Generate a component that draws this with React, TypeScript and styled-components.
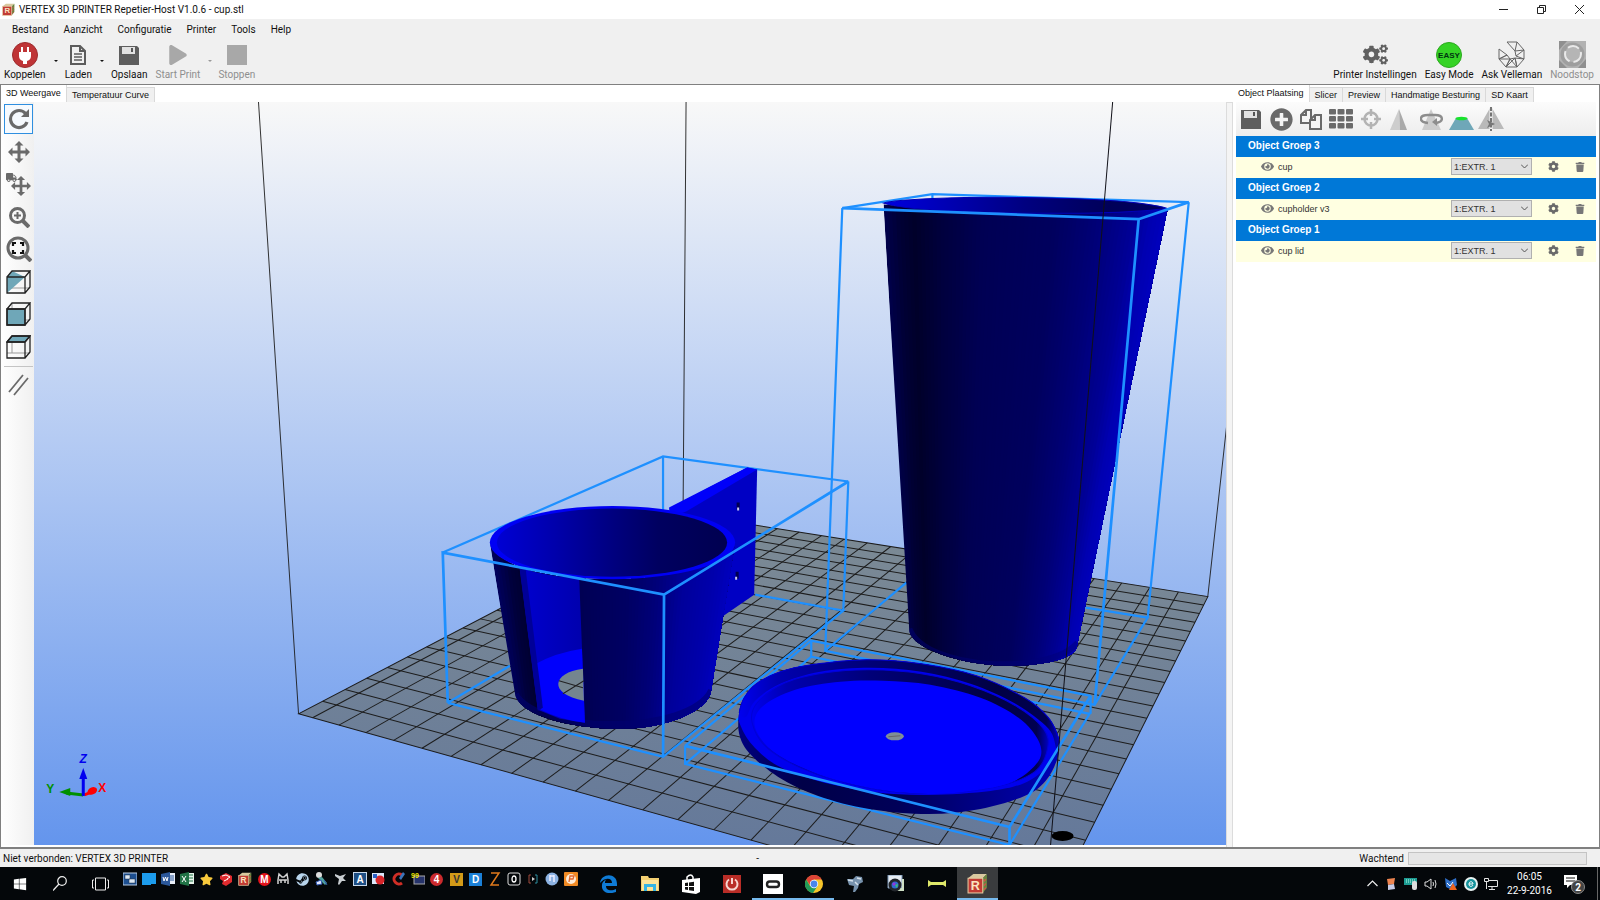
import React, { useState } from 'react';
import styled, { createGlobalStyle } from 'styled-components';
import { FaCog, FaTrash, FaEye, FaPlay, FaTruck, FaPlusCircle, FaWindows, FaStar, FaSteam, FaCogs } from 'react-icons/fa';

const ui = 'Roboto, "Noto Sans", sans-serif';
const classic = '"Liberation Sans", Arial, sans-serif';

const Global = createGlobalStyle`
  * { box-sizing: border-box; }
  html, body { margin: 0; padding: 0; }
  body { background: #f0f0f0; font: 10px/14px ${ui}; color: #111; }
  button, select { font: inherit; color: inherit; border: 0; padding: 0; margin: 0; background: none; }
  svg { display: block; flex: none; }
`;

/* ---------- window frame ---------- */

const Window = styled.div`
  display: flex;
  flex-direction: column;
  height: 100vh;
  overflow: hidden;
`;

const TitleBar = styled.header`
  display: flex;
  align-items: center;
  height: 19px;
  padding: 0 4px 0 2px;
  gap: 4px;
  background: #fff;
`;

const Title = styled.h1`
  flex: 1;
  margin: 0;
  font: 10px/14px ${ui};
`;

const CaptionButton = styled.button`
  display: flex;
  justify-content: center;
  width: 34px;
`;

const MenuBar = styled.nav`
  display: flex;
  gap: 15px;
  height: 20px;
  padding: 1px 0 0 12px;
  line-height: 20px;
`;

const Toolbar = styled.div`
  display: flex;
  align-items: flex-start;
  height: 45px;
  padding: 2px 6px 0 4px;
`;

const ToolButton = styled.button<{ $muted?: boolean; $gap: number }>`
  display: flex;
  flex-direction: column;
  align-items: center;
  margin-left: ${p => p.$gap}px;
  color: ${p => (p.$muted ? '#8e8e8e' : '#111')};
`;

const IconSlot = styled.span`
  display: flex;
  align-items: center;
  justify-content: center;
  height: 27px;
`;

const Caret = styled.button<{ $muted?: boolean }>`
  width: 0;
  height: 0;
  margin: 19px 0 0 8px;
  border: 2px solid transparent;
  border-top-color: ${p => (p.$muted ? '#999' : '#111')};
`;

const Spacer = styled.div`
  flex: 1;
`;

const Workspace = styled.main`
  flex: 1;
  min-height: 0;
  display: flex;
  border: solid #808080;
  border-width: 1px 1px 2px;
  background: #fff;
`;

const LeftPane = styled.section`
  flex: 1;
  min-width: 0;
  display: flex;
  flex-direction: column;
`;

const Tabs = styled.div`
  display: flex;
  align-items: flex-end;
  height: 17px;
  font: 9px/14px ${classic};
`;

const Tab = styled.button<{ $active?: boolean }>`
  height: ${p => (p.$active ? 17 : 15)}px;
  padding: 0 5px ${p => (p.$active ? 2 : 0)}px;
  background: ${p => (p.$active ? '#fff' : '#f0f0f0')};
  border: solid #d9d9d9;
  border-width: ${p => (p.$active ? '0 1px 0 0' : '1px 1px 0 0')};
`;

const ViewRow = styled.div`
  flex: 1;
  min-height: 0;
  display: flex;
  padding-bottom: 2px;
`;

const SideTools = styled.div`
  width: 33px;
  padding: 2px 1px 0 3px;
  background: linear-gradient(90deg, #fff, #f0f0f0);
`;

const SideGrid = styled.div`
  display: grid;
  grid-template-rows: repeat(4, 33px 32px);
  margin-bottom: 3px;
  padding-bottom: 2px;
  border-bottom: 1px solid #c4c4c4;
`;

const SideButton = styled.button<{ $on?: boolean }>`
  display: flex;
  align-items: center;
  justify-content: center;
  width: 29px;
  height: 30px;
  border: 1px solid ${p => (p.$on ? '#2f8fe0' : 'transparent')};
  background: ${p => (p.$on ? '#f6fafe' : 'none')};
`;

const Viewport = styled.svg`
  flex: 1;
  min-width: 0;
  height: 100%;
`;

const Splitter = styled.div`
  width: 7px;
  margin-top: 17px;
  border: solid #dcdcdc;
  border-width: 1px 1px 0;
  background: #f4f4f4;
`;

/* ---------- object panel ---------- */

const RightPane = styled.aside`
  width: 366px;
  padding-right: 3px;
  display: flex;
  flex-direction: column;
`;

const PanelTools = styled.div`
  display: flex;
  align-items: center;
  gap: 4px;
  height: 34px;
  margin-left: 3px;
  padding-left: 2px;
  background: linear-gradient(#fcfcfc, #ededed);
`;

const PanelButton = styled.button`
  display: flex;
  justify-content: center;
  width: 26px;
`;

const ObjectList = styled.div`
  margin-left: 3px;
`;

const GroupHeader = styled.h2`
  height: 21px;
  margin: 0;
  padding-left: 12px;
  background: #0078d7;
  color: #fff;
  font: bold 10px/20px ${classic};
`;

const ObjectRow = styled.div`
  display: flex;
  align-items: center;
  height: 21px;
  padding: 0 9px 2px 25px;
  background: #ffffe1;
  font: 9px/14px ${classic};
  color: #333;
`;

const ObjectName = styled.label`
  flex: 1;
  padding-left: 4px;
`;

const SelectBox = styled.span`
  position: relative;
  width: 81px;
  margin-right: 16px;

  svg { position: absolute; right: 4px; top: 6px; pointer-events: none; }
`;

const ExtruderSelect = styled.select`
  display: block;
  appearance: none;
  width: 100%;
  height: 17px;
  padding-left: 2px;
  border: 1px solid #b0b0b0;
  border-radius: 0;
  background: #e1e1e1;
`;

const RowButton = styled.button`
  width: 12px;
  margin-left: 15px;
  &:first-of-type { margin-left: 0; }
`;

/* ---------- bottom bars ---------- */

const StatusBar = styled.footer`
  display: grid;
  grid-template-columns: 9fr 10fr;
  align-items: center;
  height: 18px;
  padding: 1px 13px 0 3px;
  background: #f0f0f0;
`;

const StatusRight = styled.div`
  display: flex;
  align-items: center;
  justify-content: space-between;
  padding-left: 3px;
`;

const StatusProgress = styled.div`
  display: flex;
  align-items: center;
  gap: 4px;
`;

const Progress = styled.div`
  width: 179px;
  height: 13px;
  border: 1px solid #c4c4c4;
  background: #e6e6e6;
`;

const Taskbar = styled.nav`
  display: flex;
  height: 33px;
  background: #04070a;
  color: #fff;
`;

const TaskButton = styled.button<{ $w: number; $running?: boolean; $focused?: boolean }>`
  display: flex;
  align-items: center;
  justify-content: center;
  width: ${p => p.$w}px;
  background: ${p => (p.$focused ? '#3a3c3e' : 'none')};
  box-shadow: ${p => (p.$running || p.$focused ? 'inset 0 -2px #76b9ed' : 'none')};
`;

const QuickLaunch = styled.div`
  display: grid;
  grid-template-columns: repeat(24, 1fr);
  width: 461px;
  height: 24px;
  margin-right: 7px;
`;

const QuickButton = styled.button`
  display: flex;
  align-items: center;
  justify-content: center;
`;

const Tray = styled.div`
  display: flex;
  align-items: center;
  gap: 6px;
`;

const Clock = styled.time`
  width: 51px;
  text-align: center;
`;

const ActionCenter = styled.button`
  width: 28px;
  margin: 0 7px 0 1px;
`;

const DesktopEdge = styled.div`
  width: 3px;
  border-left: 1px solid #666;
`;

/* ---------- icons ---------- */

const G = '#6a6a6a';

const AppLogo = ({ size = 13 }: { size?: number }) => (
  <svg width={size} height={size} viewBox="0 0 20 20">
    <path d="M1 5 6 1h13l-4 4z" fill="#d8c9a0" />
    <path d="M15 5l4-4v13l-4 5z" fill="#68853f" />
    <path d="M16 8l2-2M16 12l2-2M16 16l2-2" stroke="#c9534a" strokeWidth="1.5" />
    <rect x="1" y="5" width="14" height="14" fill="#c23b34" stroke="#e5c9a0" />
    <text x="8" y="16" fontFamily={classic} fontWeight="bold" fontSize="12" fill="#fbe3c0" textAnchor="middle">R</text>
  </svg>
);

const Disk = ({ size }: { size: number }) => (
  <svg width={size} height={size} viewBox="0 0 20 20">
    <path d="M0 1h18l2 2v17H0z" fill="#5e5e5e" />
    <path d="M3 2h13v7H3z" fill="#e2e2e2" />
    <path d="M12 3h2v4h-2z" fill="#555" />
  </svg>
);

const Move = ({ size = 22 }: { size?: number }) => (
  <svg width={size} height={size} viewBox="0 0 22 22" fill={G}>
    <path d="M11 0l4.500 4.500h-3v5h5v-3L22 11l-4.500 4.500v-3h-5v5h3L11 22l-4.500-4.500h3v-5h-5v3L0 11l4.500-4.500v3h5v-5h-3z" />
  </svg>
);

const Cube = ({ mode }: { mode: 'cut' | 'front' | 'top' }) => (
  <svg width="25" height="24" viewBox="0 0 25 24" fill="none" stroke="#222" strokeWidth="1.3">
    <path d="M6 1v17H1M6 18h18" stroke="#999" strokeWidth="1" />
    {mode === 'cut' && <path d="M1 7 6 1l13 6L1 23z" fill="#6fa7b8" stroke="none" />}
    {mode === 'front' && <path d="M1 7h18v16H1z" fill="#6fa7b8" />}
    {mode === 'top' && <path d="M1 7l5-6h18l-5 6z" fill="#6fa7b8" />}
    <path d="M1 7h18v16H1zM1 7l5-6h18l-5 6M24 1v16l-5 6" />
  </svg>
);

const SideIcons: [string, React.ReactNode][] = [
  ['Roteren', <svg key="r" width="22" height="22" viewBox="0 0 22 22"><path d="M17.500 5.500A8.500 8.500 0 1 0 19 14" fill="none" stroke={G} strokeWidth="3.200" /><path d="M21 1v8h-8z" fill={G} /></svg>],
  ['Verplaats weergave', <Move key="m" />],
  ['Verplaats object', <svg key="o" width="25" height="25" viewBox="0 0 25 25"><FaTruck x="0" y="0" size="11" color={G} /><g transform="translate(5 4)"><Move size={20} /></g></svg>],
  ['Zoom', <svg key="z" width="22" height="22" viewBox="0 0 22 22" fill="none" stroke={G}><circle cx="9.500" cy="9.500" r="7" strokeWidth="3" /><path d="M15 15l6 6" strokeWidth="4" /><path d="M6 9.500h7M9.500 6v7" strokeWidth="2" /></svg>],
  ['Passend', <svg key="p" width="26" height="26" viewBox="0 0 26 26" fill="none" stroke={G}><circle cx="12" cy="12" r="10" strokeWidth="3" /><path d="M19 19l6 6" strokeWidth="4" /><path d="M7 10V7h3M14 7h3v3M17 14v3h-3M10 17H7v-3" stroke="#111" strokeWidth="2.200" /></svg>],
  ['Perspectief', <Cube key="c" mode="cut" />],
  ['Voorkant', <Cube key="f" mode="front" />],
  ['Bovenkant', <Cube key="t" mode="top" />],
];

const PanelIcons: [string, React.ReactNode][] = [
  ['Opslaan', <Disk key="d" size={20} />],
  ['Toevoegen', <FaPlusCircle key="p" size={23} color={G} />],
  ['Dupliceren', <svg key="c" width="22" height="21" viewBox="0 0 22 21" fill="#f5f5f5" stroke={G} strokeWidth="2"><path d="M1 6l5-5h5v13H1zM1 6h5V1" /><path d="M10 11l5-5h6v14H10zM10 11h5V6" /></svg>],
  ['Schikken', <svg key="g" width="24" height="20" viewBox="0 0 24 20" fill={G}>{[0, 7, 14].map(y => [0, 8.5, 17].map(x => <rect key={`${x}-${y}`} x={x} y={y} width="7" height="5.500" rx="1" />))}</svg>],
  ['Centreren', <svg key="t" width="20" height="20" viewBox="0 0 20 20" fill="none" stroke="#b3b3b3" strokeWidth="2.500"><circle cx="10" cy="10" r="6.500" /><path d="M10 0v7M10 13v7M0 10h7M13 10h7" /></svg>],
  ['Schalen', <svg key="s" width="23" height="21" viewBox="0 0 23 21"><path d="M9 0 0 21h10z" fill="#cdcdcd" /><path d="M9 0l8 21h-7z" fill="#aaa" /></svg>],
  ['Object roteren', <svg key="o" width="23" height="21" viewBox="0 0 23 21"><path d="M11 0 2 21h19z" fill="#ccc" /><path d="M8 14C-2 13-1 6 8 6h7c9 0 9 7 1 8" fill="none" stroke="#8d8d8d" strokeWidth="2.400" /><path d="M17 9v8l-5-4z" fill="#8d8d8d" /></svg>],
  ['Doorsnede', <svg key="k" width="25" height="21" viewBox="0 0 25 21"><path d="M7 9h11l7 12H0z" fill="#6fa7b8" /><ellipse cx="12.500" cy="9.500" rx="6" ry="1.800" fill="#19e22c" /></svg>],
  ['Spiegelen', <svg key="m" width="26" height="24" viewBox="0 0 26 24"><path d="M12 1v21H0zM14 1v21h12z" fill="#b9b9b9" /><path d="M13 0v24" stroke="#f4f4f4" strokeWidth="3" /><path d="M13 0v24" stroke="#555" strokeWidth="1.600" strokeDasharray="4 1.500" /><path d="M9 13l8 4-8 4 2-4z" fill="#777" /></svg>],
];

const Velleman = (
  <svg width="27" height="27" viewBox="0 0 27 27" fill="none" stroke="#666" strokeWidth="1">
    <path d="M9 1h10l7 8-9 1zM19 1l-2 9M26 9v9l-8-3zM18 15l-1-5M26 18l-7 8-2-9zM19 26H8l4-8 5-1zM8 26l9-9M12 18l7 8M8 26l-7-8 8-4 3 4zM1 18l11 0M1 18V8l8 6z" />
  </svg>
);

const Emergency = (
  <svg width="27" height="27" viewBox="0 0 27 27">
    <path d="M0 0h27v27H0z" fill="#b2b2b2" />
    <path d="M0 0h8L0 9zM27 27h-8l8-9zM0 27v-8l8 8z" fill="#8f8f8f" />
    <circle cx="13.500" cy="13.500" r="12" fill="#9e9e9e" />
    <circle cx="14" cy="13" r="8" fill="#b5b5b5" stroke="#e9e9e9" strokeWidth="2" strokeDasharray="12 4" />
  </svg>
);

const Letter = ({ bg, fg = '#fff', ch, round }: { bg: string; fg?: string; ch: string; round?: boolean }) => (
  <svg width="13" height="13" viewBox="0 0 13 13">
    <rect width="13" height="13" rx={round ? 6.5 : 0} fill={bg} />
    <text x="6.500" y="10" fontFamily={classic} fontWeight="bold" fontSize="10" fill={fg} textAnchor="middle">{ch}</text>
  </svg>
);

const glyph = (children: React.ReactNode) => <svg width="14" height="14" viewBox="0 0 14 14">{children}</svg>;

const quick: [string, React.ReactNode][] = [
  ['Netwerk', glyph(<><rect y="1" width="14" height="12" fill="#1d4f91" stroke="#b8cce4" /><path d="M2 3h5v4H2zM6 7h6v4H6z" fill="#dce8f5" stroke="#234" strokeWidth=".5" /></>)],
  ['Bureaublad', glyph(<path d="M0 1h14v11H9v1H0z" fill="#1c9bec" />)],
  ['Word', glyph(<><path d="M7 1h7v11H7z" fill="#e9eef8" /><path d="M9 4h4M9 6h4M9 8h4" stroke="#2b579a" /><path d="M0 2l9-2v14l-9-2z" fill="#2b579a" /><path d="M2 5l1 4 1.500-4L6 9l1-4" fill="none" stroke="#fff" /></>)],
  ['Excel', glyph(<><path d="M7 1h7v11H7z" fill="#e6f3ea" /><path d="M9 3h4M9 6h4M9 9h4" stroke="#217346" /><path d="M0 2l9-2v14l-9-2z" fill="#217346" /><path d="M2 4l4 6M6 4l-4 6" stroke="#fff" /></>)],
  ['Favorieten', <FaStar key="s" size={13} color="#f8c93c" />],
  ['SketchUp', glyph(<><path d="M1 4l6-3 6 3v6l-6 4-4-2 1-3-3-2z" fill="#e02a2e" /><path d="M3 4l4-1 4 2-3 2M5 9l4-2" stroke="#fff" fill="none" /></>)],
  ['Repetier-Host', <AppLogo key="a" size={14} />],
  ['Mega', <Letter key="m" bg="#e3131b" ch="M" round />],
  ['Controller', glyph(<path d="M2 12V8l1-6 3 3h2l3-3 1 6v4M3 8h8M5 8v3M9 8v3" fill="none" stroke="#d4d4d4" strokeWidth="1.500" />)],
  ['Steam', <FaSteam key="st" size={13} color="#b8d4ec" />],
  ['Meting', glyph(<><circle cx="4" cy="3" r="3" fill="#ddd" /><path d="M3 6l4-1 5 6-2 2z" fill="#50a3a0" /><path d="M1 10l5-2 1 4-5 1zM9 8l3 5" fill="#dfe6ff" stroke="#3158b0" /></>)],
  ['Vliegtuig', glyph(<path d="M1 2l5 2 6-2-3 4 3 3-4 0-3 4-1-1 1-5-4-3z" fill="#c9ced2" />)],
  ['Autorun', glyph(<><rect x=".5" y=".5" width="13" height="13" fill="#1d4e84" stroke="#c8d8ea" /><text x="7" y="11" fontFamily={classic} fontWeight="bold" fontSize="10" fill="#fff" textAnchor="middle">A</text></>)],
  ['Kaart', glyph(<><path d="M0 1h12v11H0z" fill="#dbe8fb" /><circle cx="8" cy="8" r="4.500" fill="#d9252a" /><path d="M1 2h4v4H1z" fill="#2d61c4" /></>)],
  ['CCleaner', glyph(<><path d="M10 3a5 5 0 1 0 0 8" fill="none" stroke="#cf2e26" strokeWidth="3" /><path d="M7 6l4-6 2 2-4 6z" fill="#3b74ba" /></>)],
  ['Fps', glyph(<><rect x="3" y="4" width="11" height="8" fill="#26336b" stroke="#aaa" /><text x="0" y="6" fontSize="7" fontWeight="bold" fontFamily={classic} fill="#f3e700">99</text></>)],
  ['Vier', <Letter key="4" bg="#cb2a2d" ch="4" round />],
  ['Vertex', <Letter key="v" bg="#d39a18" fg="#333" ch="V" />],
  ['Designer', <Letter key="dd" bg="#1b80d8" ch="D" />],
  ['Zbrush', glyph(<path d="M3 1h8L3 13h8" fill="none" stroke="#e07a1c" strokeWidth="1.500" />)],
  ['Nul', glyph(<><rect x="1" y="1" width="12" height="12" rx="2" fill="none" stroke="#ddd" /><ellipse cx="7" cy="7" rx="2" ry="3" fill="none" stroke="#fff" strokeWidth="1.300" /></>)],
  ['Opname', glyph(<><path d="M5 3H3v8h2" fill="none" stroke="#a04a3c" /><path d="M9 3h2v8H9" fill="none" stroke="#2f8fa0" /><path d="M6 5l3 2-3 2z" fill="#ccc" /></>)],
  ['Muziek', glyph(<><circle cx="7" cy="7" r="6.500" fill="#8cb2e2" /><path d="M5 3v6M9 3v7M5 4h4" stroke="#eef" strokeWidth="1.500" /></>)],
  ['Scannen', glyph(<><rect width="14" height="14" rx="1" fill="#f08a24" /><circle cx="7" cy="7" r="5" fill="#fdebd8" /><path d="M5 10l1-6h4l-1 3H6" fill="none" stroke="#e2672c" strokeWidth="1.300" /></>)],
];

const pinned: [string, React.ReactNode, boolean?, boolean?][] = [
  ['Edge', <svg key="1" width="17" height="18" viewBox="0 0 17 18"><path d="M0 8C1-2 17-3 17 9v2H6c0 5 6 5 10 3v3C8 20 1 17 2 10c0-3 3-5 5-6-2 1-2 3-2 4h7c0-6-8-5-12 0z" fill="#0f7bd6" /></svg>],
  ['Verkenner', <svg key="2" width="18" height="17" viewBox="0 0 18 17"><path d="M0 1h7l1 2h10v13H0z" fill="#f3cf72" /><path d="M1 5h16v10H1z" fill="#fde59b" /><path d="M3 9h12v7h-3v-4H6v4H3z" fill="#35b5e5" /></svg>],
  ['Store', <svg key="3" width="18" height="20" viewBox="0 0 18 20"><path d="M5 6V3q4-4 6 0v3" fill="none" stroke="#fff" strokeWidth="1.500" /><path d="M0 6l18-2v14l-4 2-14-2z" fill="#fff" /><path d="M3 9l3-.5V12H3zM7 8.500l5-.8V12H7zM3 13h3v3l-3-.5zM7 13h5v4l-5-.8z" fill="#111" /></svg>],
  ['Afsluiten', <svg key="4" width="18" height="18" viewBox="0 0 18 18"><path d="M0 0h18v18H0z" fill="#b92d27" /><path d="M6 4.500a5.500 5.500 0 1 0 6 0M9 3v6" fill="none" stroke="#f7d5d0" strokeWidth="2" /></svg>],
  ['Oculus', <svg key="5" width="20" height="20" viewBox="0 0 20 20"><path d="M0 0h20v20H0z" fill="#fff" /><rect x="4" y="7.500" width="12" height="5.500" rx="2.700" fill="none" stroke="#222" strokeWidth="2.400" /></svg>, true],
  ['Chrome', <svg key="6" width="18" height="18" viewBox="0 0 18 18"><circle cx="9" cy="9" r="9" fill="#f6c52b" /><path d="M1.200 4.500A9 9 0 0 1 16.800 4.500H9L5.500 11z" fill="#dc4437" /><path d="M1.200 4.500A9 9 0 0 0 8 18l4.500-7L5 11z" fill="#219b59" /><circle cx="9" cy="9" r="4.200" fill="#fff" /><circle cx="9" cy="9" r="3.400" fill="#4a86ec" /></svg>, true],
  ['Robot', <svg key="7" width="18" height="18" viewBox="0 0 18 18"><path d="M1 4l6 0 3-3 6 1 1 5-4 2-1 4-3 4-2 0 1-6-5-1z" fill="#7792ad" /><path d="M2 5l5 1M11 3l4 1M9 7l3 3" stroke="#d5e1ec" strokeWidth="1.500" /></svg>],
  ['Camera', <svg key="8" width="19" height="18" viewBox="0 0 19 18"><path d="M2 0h14v13H2z" fill="#e8eef5" stroke="#7894b4" /><path d="M16 4h2v12H9V13h7z" fill="#cfe0c5" /><circle cx="9" cy="10" r="6.500" fill="#22252b" /><circle cx="9" cy="10" r="3.500" fill="#2f6bd0" /><path d="M9 10l3-1-1 4z" fill="#3ec46a" /><circle cx="8" cy="9" r="1.500" fill="#93d" /></svg>],
  ['Bot', <svg key="9" width="18" height="8" viewBox="0 0 18 8"><path d="M0 0l3 2h12l3-2v7l-3-2H3L0 7z" fill="#dfe86a" /></svg>],
  ['Repetier-Host', <AppLogo key="10" size={21} />, false, true],
];

/* ---------- 3D scene ---------- */

type P = [number, number];

const lerp = (a: number, b: number, t: number) => a + (b - a) * t;

/* Projects bed coordinates (0..1 on both axes) to the view. */
const bed = (u: number, v: number): P => {
  const w = 1 - 0.2572 * u + 0.4989 * v;
  return [(476.5 * u + 723.3 * v + 299) / w, (-28.9 * u + 55.9 * v + 713) / w];
};

const poly = (pts: P[]) => pts.map(p => p.join(',')).join(' ');

/* Catmull-Rom curve through the points. */
const curve = (pts: P[], closed = false) => {
  const n = pts.length;
  const at = (i: number) => (closed ? pts[(i + n) % n] : pts[Math.max(0, Math.min(n - 1, i))]);
  let d = `M${pts[0]}`;
  for (let i = 0; i < (closed ? n : n - 1); i++) {
    const [a, b, c, e] = [at(i - 1), at(i), at(i + 1), at(i + 2)];
    d += `C${b[0] + (c[0] - a[0]) / 6},${b[1] + (c[1] - a[1]) / 6} ${c[0] - (e[0] - b[0]) / 6},${c[1] - (e[1] - b[1]) / 6} ${c[0]},${c[1]}`;
  }
  return closed ? d + 'Z' : d;
};

const shade = (stops: P[], t: number) => {
  const i = Math.max(1, stops.findIndex(s => s[0] >= t));
  const [a, b] = [stops[i - 1], stops[i]];
  return `rgb(0,0,${Math.round(lerp(a[1], b[1], (t - a[0]) / (b[0] - a[0])))})`;
};

/* Vertical facets of a tapered cylinder, each overlapping the next one. */
const Facets = ({ tl, tr, bl, br, y0, y1, stops }: { tl: number; tr: number; bl: number; br: number; y0: number; y1: number; stops: P[] }) => (
  <g>
    {Array.from({ length: 70 }, (_, i) => i / 70).map(t => (
      <polygon key={t} fill={shade(stops, t)} points={poly([[lerp(tl, tr, t), y0], [tr + 2, y0], [br + 8, y1], [lerp(bl, br, t), y1]])} />
    ))}
  </g>
);

const Stops = ({ id, list, vertical }: { id: string; list: [number, string][]; vertical?: boolean }) => (
  <linearGradient id={id} x1="0" y1="0" x2={vertical ? 0 : 1} y2={vertical ? 1 : 0}>
    {list.map(([o, c]) => <stop key={o} offset={o} stopColor={c} />)}
  </linearGradient>
);

const floorU = Array.from({ length: 21 }, (_, k) => 0.0251 + 0.0464 * k);
const floorV = Array.from({ length: 23 }, (_, k) => 0.0427 + 0.0416 * k);

const lidRim: P[] = [[739, 712], [744, 697], [756, 683], [780, 671], [811, 664], [866, 659], [921, 663], [976, 675], [1024, 697], [1048, 717], [1058, 737]];
const lidSide: P[] = [[1057, 757], [1045, 780], [1024, 795], [980, 808], [928, 813], [869, 808], [818, 795], [778, 776], [749, 752], [739, 733]];
const lidLip: P[] = [[1058, 747], [1045, 767], [1024, 782], [990, 790], [928, 794], [873, 791], [818, 780], [776, 764], [752, 744], [740, 724]];
const lidStep: P[] = [[752, 722], [757, 702], [785, 682], [825, 672], [870, 669], [921, 673], [970, 685], [1015, 705], [1043, 728], [1047, 748], [1034, 771], [995, 786], [928, 793], [868, 787], [810, 771], [768, 748]];
const lidFloor: P[] = [[755, 727], [762, 706], [795, 689], [840, 681], [883, 680], [930, 684], [980, 697], [1018, 717], [1038, 740], [1038, 760], [1012, 781], [970, 790], [928, 793], [875, 788], [820, 774], [775, 752]];

const Scene = () => (
  <Viewport viewBox="34 102 1192 742" preserveAspectRatio="xMidYMid slice" role="img" aria-label="3D weergave">
    <defs>
      <Stops id="sky" vertical list={[[0, '#f8f8f8'], [1, '#6495ed']]} />
      <Stops id="floor" vertical list={[[0, '#7d8b94'], [0.8, '#65799a'], [1, '#65799a']]} />
      <Stops id="cupIn" list={[[0, '#0000e0'], [0.2, '#0000b8'], [0.5, '#000080'], [0.8, '#000058'], [1, '#000060']]} />
      <Stops id="holdIn" list={[[0, '#0000d4'], [0.25, '#0000ac'], [0.5, '#000080'], [0.7, '#000060'], [1, '#000050']]} />
      <Stops id="wall" list={[[0, '#0000d0'], [1, '#0000ac']]} />
      <Stops id="lidOut" list={[[0, '#000080'], [0.2, '#000048'], [0.5, '#000058'], [0.8, '#000090'], [1, '#0000b8']]} />
      <Stops id="lidIn" list={[[0, '#0000f0'], [0.12, '#0000b0'], [0.4, '#000078'], [0.8, '#000044'], [0.96, '#000050'], [1, '#0000c0']]} />
      <clipPath id="cupClip">
        <path d="M883 204C960 216 1090 216 1167 208L1076 647C1074 656 1050 665 1007 665C960 664 913 648 909 631Z" />
      </clipPath>
      <clipPath id="holdClip">
        <path d="M490 543C500 570 560 579 612 579C670 579 730 564 735 541L711 690C708 710 668 728 620 728C570 728 517 714 515 692Z" />
      </clipPath>
    </defs>

    <rect x="34" y="102" width="1192" height="742" fill="url(#sky)" />
    <g stroke="#1c1c1c" strokeWidth="1" fill="none">
      <polygon points={poly([bed(0, 0), bed(1, 0), bed(1, 1), bed(0, 1)])} fill="url(#floor)" />
      {floorU.map(u => <path key={u} d={`M${bed(u, 0)}L${bed(u, 1)}`} />)}
      {floorV.map(v => <path key={v} d={`M${bed(0, v)}L${bed(1, v)}`} />)}
      <path d="M259 102 299 713M686 102 683 513M1207 596 1226 424" strokeWidth=".9" />
    </g>
    <ellipse cx="1062" cy="835" rx="11" ry="5" fill="#000" />

    {/* box edges that lie behind the models */}
    <g stroke="#1e90ff" strokeWidth="2.200" fill="none">
      <path d="M443 552 663 456 848 481M663 456V510M448 702 510 665M755 594 843 610 663 756 448 702M848 481 843 610" />
      <path d="M842 208 932 194 1188 202M932 194V200M1085 607 1147 617 1094 704 825 650 842 208M825 650 906 582M1188 202 1147 617" />
      <path d="M685 745 811 640 1090 695M811 640V656M685 763 811 656 1089 713 1009 844 685 763V745M1090 695V713" />
    </g>

    {/* cup */}
    <g clipPath="url(#cupClip)">
      <Facets tl={883} tr={1168} bl={909} br={1072} y0={200} y1={668} stops={[[0, 72], [0.05, 52], [0.1, 42], [0.2, 62], [0.35, 84], [0.6, 94], [0.75, 118], [0.88, 150], [0.94, 176], [1, 190]]} />
      <path d="M909 628C925 670 1050 675 1077 642" fill="none" stroke="#000078" strokeWidth="6" opacity=".5" />
    </g>
    <path d="M883 203C910 195 1120 194 1166 208C1120 216 920 215 883 203Z" fill="url(#cupIn)" stroke="#0000b8" strokeWidth="1" />

    {/* cup holder */}
    <polygon points="757,469 754,594 722,616 690,600 680,512" fill="#0000c4" />
    <polygon points="669,508 747,467 757,469 700,522 672,520" fill="#0000c4" />
    <polygon points="669,507 747,467 757,469 686,511 672,516" fill="#0000fa" />
    <path d="M738 502v7M737 571v7" stroke="#000050" strokeWidth="3" />
    <path d="M738 507v3M736 576v3" stroke="#c8c8f0" strokeWidth="2" />
    <g clipPath="url(#holdClip)">
      <Facets tl={490} tr={736} bl={519} br={705} y0={541} y1={728} stops={[[0, 90], [0.06, 60], [0.14, 40], [0.3, 76], [0.4, 88], [0.55, 98], [0.68, 120], [0.8, 155], [0.92, 172], [1, 190]]} />
      <path d="M515 694C540 735 690 735 712 690" fill="none" stroke="#000070" strokeWidth="8" opacity=".6" />
      <polygon points="519,560 579,570 585,722 560,718 538,709" fill="url(#wall)" />
      <path d="M536 663Q556 652 582 648L585 722Q560 719 541 709Z" fill="#0000fc" />
      <path d="M583 668C552 672 548 693 584 700Z" fill="#74858f" />
      <path d="M559 680 583 687M563 693 584 680" stroke="#222" strokeWidth="1" />
      <polygon points="519,562 525,562 543,707 538,710" fill="#000098" />
    </g>
    <ellipse cx="612.500" cy="542" rx="122.500" ry="36.500" fill="#0000f4" />
    <ellipse cx="612" cy="542" rx="115" ry="34" fill="url(#holdIn)" />

    {/* lid */}
    <path d={curve([...lidRim, ...lidSide], true)} fill="url(#lidOut)" />
    <path d={curve([...lidRim, ...lidLip], true)} fill="#0000ee" />
    <path d={curve([...lidRim, [1056, 748], [1048, 728], [1015, 703], [970, 683], [921, 671], [870, 667], [820, 671], [780, 683], [755, 700], [746, 716]], true)} fill="url(#lidIn)" />
    <path d={curve(lidStep, true)} fill="url(#lidIn)" stroke="#0000d8" strokeWidth="1" />
    <path d={curve(lidFloor, true)} fill="#0000ff" />
    <path d={curve(lidRim)} fill="none" stroke="#0000d0" strokeWidth="1" />
    <ellipse cx="894.500" cy="735.500" rx="9" ry="4" fill="#808e96" />
    <path d="M888 736l12-1" stroke="#666" strokeWidth="1" />

    {/* box edges in front of the models */}
    <g stroke="#1e90ff" strokeWidth="2.700" fill="none">
      <path d="M448 702 443 552 664 594 848 481M664 594 663 756" />
      <path d="M842 208 1138 219 1188 202M1138 219 1094 704" />
      <path d="M685 745 1009 826 1090 695M1009 826V844" />
    </g>
    <path d="M1112 102 1050 844" stroke="#101018" strokeWidth="1" />

    {/* axis indicator */}
    <g strokeWidth="3" fontFamily={classic} fontWeight="bold" fontSize="12" textAnchor="middle">
      <path d="M84 794 67 792" stroke="#009000" />
      <path d="M60 791l11-4v8z" fill="#009000" />
      <path d="M85 794l8-3" stroke="#f00" />
      <ellipse cx="93" cy="790" rx="5" ry="3.500" fill="#f00" transform="rotate(-25 93 790)" />
      <path d="M84 795V775" stroke="#0000f0" />
      <path d="M84 767l4 11h-8z" fill="#0000f0" />
      <text x="84" y="762" fill="#0000f0" fontStyle="italic">Z</text>
      <text x="51" y="792" fill="#009000">Y</text>
      <text x="103" y="791" fill="#f00">X</text>
    </g>
  </Viewport>
);

/* ---------- page ---------- */

const groups = [
  { title: 'Object Groep 3', name: 'cup' },
  { title: 'Object Groep 2', name: 'cupholder v3' },
  { title: 'Object Groep 1', name: 'cup lid' },
];

export default function App() {
  const [tool, setTool] = useState('Roteren');
  return (
    <>
      <Global />
      <Window>
        <TitleBar>
          <AppLogo />
          <Title>VERTEX 3D PRINTER Repetier-Host V1.0.6 - cup.stl</Title>
          <CaptionButton aria-label="Minimaliseren"><svg width="9" height="9" viewBox="0 0 9 9"><path d="M0 4.500h9" stroke="#222" /></svg></CaptionButton>
          <CaptionButton aria-label="Vorig formaat"><svg width="9" height="9" viewBox="0 0 9 9" fill="none" stroke="#222"><path d="M.5 2.500h6v6h-6zM2.500 2V.5h6v6H7" /></svg></CaptionButton>
          <CaptionButton aria-label="Sluiten"><svg width="9" height="9" viewBox="0 0 9 9"><path d="M0 0l9 9M9 0 0 9" stroke="#222" /></svg></CaptionButton>
        </TitleBar>

        <MenuBar>
          {['Bestand', 'Aanzicht', 'Configuratie', 'Printer', 'Tools', 'Help'].map(m => <button key={m}>{m}</button>)}
        </MenuBar>

        <Toolbar>
          <ToolButton $gap={0}>
            <IconSlot>
              <svg width="26" height="26" viewBox="0 0 26 26"><circle cx="13" cy="13" r="12.500" fill="#bf3436" stroke="#9c2a2c" /><path d="M9 5h2v5h4V5h2v5h2v4q0 4-4 5v3h-4v-3q-4-1-4-5v-4h2z" fill="#fff" /></svg>
            </IconSlot>
            Koppelen
          </ToolButton>
          <Caret aria-label="Koppelen opties" />
          <ToolButton $gap={7}>
            <IconSlot>
              <svg width="16" height="20" viewBox="0 0 16 20" fill="none" stroke="#5c5c5c" strokeWidth="2"><path d="M1 1h9l5 5v13H1zM10 1v5h5" /><path d="M4 9h8M4 12h8M4 15h8" strokeWidth="1.500" /></svg>
            </IconSlot>
            Laden
          </ToolButton>
          <Caret aria-label="Laden opties" />
          <ToolButton $gap={7}><IconSlot><Disk size={20} /></IconSlot>Opslaan</ToolButton>
          <ToolButton $gap={8} $muted><IconSlot><FaPlay size={20} color="#a8a8a8" /></IconSlot>Start Print</ToolButton>
          <Caret $muted aria-label="Print opties" />
          <ToolButton $gap={6} $muted><IconSlot><svg width="20" height="20"><rect width="20" height="20" fill="#a8a8a8" /></svg></IconSlot>Stoppen</ToolButton>
          <Spacer />
          <ToolButton $gap={0}><IconSlot><FaCogs size={25} color="#606060" /></IconSlot>Printer Instellingen</ToolButton>
          <ToolButton $gap={8}>
            <IconSlot>
              <svg width="26" height="26" viewBox="0 0 26 26"><circle cx="13" cy="13" r="12.500" fill="#35d325" stroke="#2aa81d" /><text x="13" y="16" fontFamily={classic} fontWeight="bold" fontSize="8" textAnchor="middle" fill="#031">EASY</text></svg>
            </IconSlot>
            Easy Mode
          </ToolButton>
          <ToolButton $gap={8}><IconSlot>{Velleman}</IconSlot>Ask Velleman</ToolButton>
          <ToolButton $gap={8} $muted><IconSlot>{Emergency}</IconSlot>Noodstop</ToolButton>
        </Toolbar>

        <Workspace>
          <LeftPane>
            <Tabs>
              <Tab $active>3D Weergave</Tab>
              <Tab>Temperatuur Curve</Tab>
            </Tabs>
            <ViewRow>
              <SideTools>
                <SideGrid>
                  {SideIcons.map(([label, icon]) => (
                    <SideButton key={label} aria-label={label} $on={tool === label} onClick={() => setTool(label)}>{icon}</SideButton>
                  ))}
                </SideGrid>
                <SideButton aria-label="Parallel"><svg width="21" height="22" viewBox="0 0 21 22" stroke={G} strokeWidth="1.800"><path d="M1 18 15 1M6 21 20 4" /></svg></SideButton>
              </SideTools>
              <Scene />
            </ViewRow>
          </LeftPane>
          <Splitter />
          <RightPane>
            <Tabs>
              <Tab $active>Object Plaatsing</Tab>
              {['Slicer', 'Preview', 'Handmatige Besturing', 'SD Kaart'].map(t => <Tab key={t}>{t}</Tab>)}
            </Tabs>
            <PanelTools>
              {PanelIcons.map(([label, icon]) => <PanelButton key={label} aria-label={label}>{icon}</PanelButton>)}
            </PanelTools>
            <ObjectList>
              {groups.map((g, i) => (
                <section key={g.title}>
                  <GroupHeader>{g.title}</GroupHeader>
                  <ObjectRow>
                    <FaEye size={13} color="#777" />
                    <ObjectName htmlFor={`extruder-${i}`}>{g.name}</ObjectName>
                    <SelectBox>
                      <ExtruderSelect id={`extruder-${i}`}><option>1:EXTR. 1</option></ExtruderSelect>
                      <svg width="7" height="5" viewBox="0 0 7 5" fill="none" stroke="#555"><path d="M0 .5l3.500 3.500L7 .5" /></svg>
                    </SelectBox>
                    <RowButton aria-label="Instellingen"><FaCog size={11} color={G} /></RowButton>
                    <RowButton aria-label="Verwijderen"><FaTrash size={10} color="#777" /></RowButton>
                  </ObjectRow>
                </section>
              ))}
            </ObjectList>
          </RightPane>
        </Workspace>

        <StatusBar>
          <span>Niet verbonden: VERTEX 3D PRINTER</span>
          <StatusRight>
            <span>-</span>
            <StatusProgress>Wachtend<Progress role="progressbar" aria-label="Voortgang" /></StatusProgress>
          </StatusRight>
        </StatusBar>

        <Taskbar>
          <TaskButton $w={40} aria-label="Start"><FaWindows size={14} /></TaskButton>
          <TaskButton $w={40} aria-label="Zoeken"><svg width="14" height="15" viewBox="0 0 14 15" fill="none" stroke="#eee" strokeWidth="1.200"><circle cx="9" cy="5" r="4.300" /><path d="M6 8l-6 6.500" /></svg></TaskButton>
          <TaskButton $w={40} aria-label="Taakweergave"><svg width="17" height="14" viewBox="0 0 17 14" fill="none" stroke="#eee"><path d="M3.500 1h10v12h-10zM2 3H.5v8H2M15 3h1.500v8H15" /></svg></TaskButton>
          <QuickLaunch>
            {quick.map(([label, icon]) => <QuickButton key={label} aria-label={label}>{icon}</QuickButton>)}
          </QuickLaunch>
          {pinned.map(([label, icon, running, focused]) => (
            <TaskButton key={label} $w={41} $running={running} $focused={focused} aria-label={label}>{icon}</TaskButton>
          ))}
          <Spacer />
          <Tray>
            <svg width="11" height="7" viewBox="0 0 11 7" fill="none" stroke="#eee" strokeWidth="1.200"><path d="M.5 6 5.500 1l5 5" /></svg>
            <svg width="14" height="14" viewBox="0 0 14 14"><path d="M3 2l8-1-1 6-6 1z" fill="#ee8450" /><path d="M4 8l6-1 1 5-7 1z" fill="#c8cbe6" /></svg>
            <svg width="14" height="14" viewBox="0 0 14 14"><path d="M0 1h13v7H0z" fill="#1d9b92" /><path d="M2 3h9M2 5h7" stroke="#bfe" strokeDasharray="1 1" /><rect x="8" y="4" width="5" height="9" rx="2" fill="#ddd" /></svg>
            <svg width="14" height="14" viewBox="0 0 14 14" fill="none" stroke="#ddd"><path d="M1 5h2l4-3v10L3 9H1zM9 5q1 2 0 4M11 3q2 4 0 8" /></svg>
            <svg width="14" height="14" viewBox="0 0 14 14"><path d="M1 1l5 3 6-3 1 7-5 5-6-3z" fill="#2f6fc8" /><path d="M9 6l4 7H5z" fill="#f0641e" /><path d="M3 6l3 3 3-4" stroke="#fff" fill="none" /></svg>
            <svg width="14" height="14" viewBox="0 0 14 14"><circle cx="7" cy="7" r="7" fill="#e8f2f2" /><circle cx="7" cy="7" r="5" fill="#16939c" /><path d="M5 7h4c0-3-4-3-4 0s3 3 4 1" stroke="#fff" fill="none" /></svg>
            <svg width="14" height="14" viewBox="0 0 14 14" fill="none" stroke="#e4e4e4"><path d="M4 3.500h9.500v6H4M5 12.500h6M8 10v2M.5 1.500h4v3h-4zM2.500 5v7" /></svg>
            <Clock>06:05<br />22-9-2016</Clock>
            <ActionCenter aria-label="Actiecentrum">
              <svg width="24" height="22" viewBox="0 0 24 22"><path d="M2 2h13v10H8l-3 3v-3H2z" fill="#fff" /><path d="M4 5h9M4 8h9" stroke="#111" /><circle cx="16" cy="14" r="6.500" fill="#444" stroke="#888" /><text x="16" y="18" fontFamily={ui} fontSize="10" fontWeight="bold" fill="#fff" textAnchor="middle">2</text></svg>
            </ActionCenter>
          </Tray>
          <DesktopEdge />
        </Taskbar>
      </Window>
    </>
  );
}
